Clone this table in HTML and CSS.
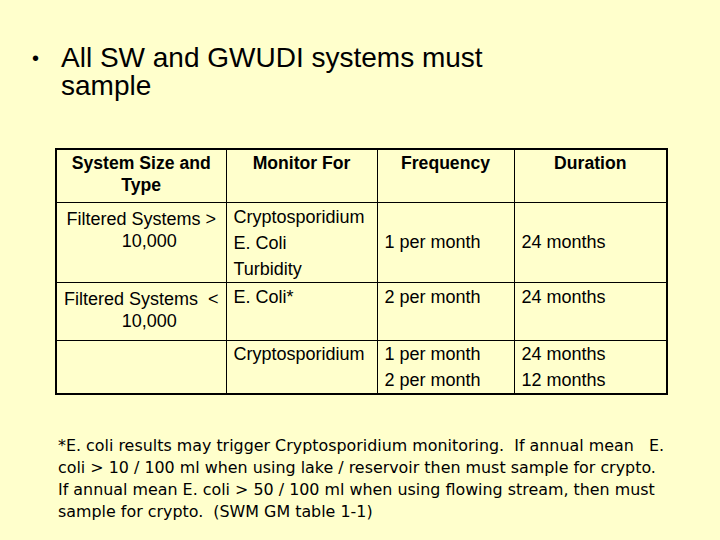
FILE: index.html
```html
<!DOCTYPE html>
<html>
<head>
<meta charset="utf-8">
<link rel="stylesheet" href="styles.css">
</head>
<body>
<div class="slide">
  <div class="title">
    <span class="bullet">•</span>
    <span class="title-text">All SW and GWUDI systems must sample</span>
  </div>

  <table class="grid">
    <colgroup>
      <col class="c1"><col class="c2"><col class="c3"><col class="c4">
    </colgroup>
    <tr class="r-head">
      <th class="col1">System Size and<br>Type</th>
      <th>Monitor For</th>
      <th>Frequency</th>
      <th>Duration</th>
    </tr>
    <tr class="r1">
      <td class="col1">Filtered Systems &gt;<br><span class="shift">10,000</span></td>
      <td class="list"><div>Cryptosporidium</div><div>E. Coli</div><div>Turbidity</div></td>
      <td class="list mid">1 per month</td>
      <td class="list mid">24 months</td>
    </tr>
    <tr class="r2">
      <td class="col1">Filtered Systems &nbsp;&lt;<br><span class="shift">10,000</span></td>
      <td class="list">E. Coli*</td>
      <td class="list">2 per month</td>
      <td class="list">24 months</td>
    </tr>
    <tr class="r3">
      <td class="col1"></td>
      <td class="list">Cryptosporidium</td>
      <td class="list"><div>1 per month</div><div>2 per month</div></td>
      <td class="list"><div>24 months</div><div>12 months</div></td>
    </tr>
  </table>

  <p class="note">*E. coli results may trigger Cryptosporidium monitoring.&nbsp; If annual mean &nbsp; E.<br>coli &gt; 10 / 100 ml when using lake / reservoir then must sample for crypto.<br>If annual mean E. coli &gt; 50 / 100 ml when using flowing stream, then must<br>sample for crypto.&nbsp; (SWM GM table 1-1)</p>
</div>
</body>
</html>
```

FILE: styles.css
```css
html, body {
  margin: 0;
  padding: 0;
  background: #ffffcc;
}

.slide {
  width: 720px;
  height: 540px;
  background: #ffffcc;
  color: #000;
  font-family: "Liberation Sans", Arial, sans-serif;
  padding-top: 44px;
  box-sizing: border-box;
}

.title {
  display: flex;
  align-items: flex-start;
  font-size: 28px;
  line-height: 28px;
  padding-left: 32px;
}

.bullet {
  width: 29px;
  font-size: 20px;
  line-height: 28px;
}

.title-text {
  width: 470px;
}

.grid {
  margin-top: 48px;
  margin-left: 55px;
  border-collapse: collapse;
  border: 2px solid #000;
  table-layout: fixed;
  width: 611px;
  font-size: 18px;
}

.c1 { width: 170px; }
.c2 { width: 151px; }
.c3 { width: 137px; }
.c4 { width: 153px; }

.grid th,
.grid td {
  border: 1px solid #000;
  padding: 4px 7px 0 7px;
  vertical-align: top;
}

.grid th {
  font-size: 17.6px;
  font-weight: bold;
  text-align: center;
  line-height: 22px;
  padding-top: 2px;
}

.r-head { height: 53px; }
.r1 { height: 79px; }
.r2 { height: 58px; }
.r3 { height: 53px; }

.grid td.col1 {
  text-align: center;
  line-height: 22px;
  padding-top: 5px;
  padding-left: 4px;
  padding-right: 4px;
}

.shift {
  display: inline-block;
  margin-left: 16px;
}

.grid td.list {
  line-height: 26px;
  padding-top: 1px;
}

.r3 td.list {
  padding-top: 0;
}

.grid td.mid {
  vertical-align: middle;
  padding-top: 0;
}

.note {
  margin: 40px 0 0 58px;
  font-family: "DejaVu Sans", sans-serif;
  font-size: 15.9px;
  line-height: 22px;
  white-space: nowrap;
}
```
